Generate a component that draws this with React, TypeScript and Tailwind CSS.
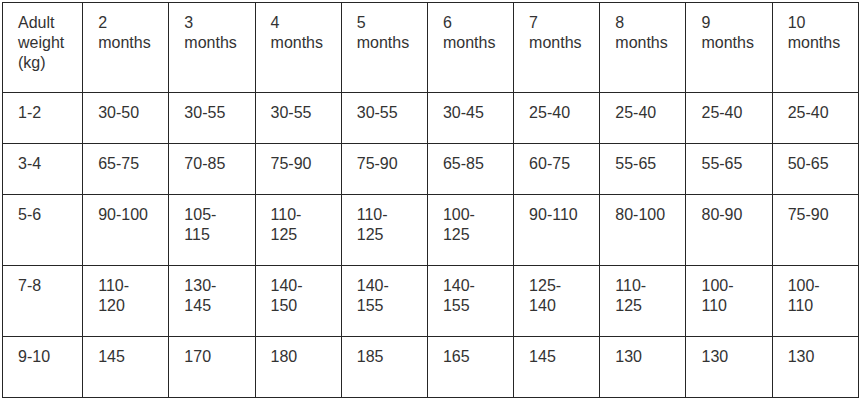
import React from "react";

const headers = ["2", "3", "4", "5", "6", "7", "8", "9", "10"];

const rows: { weight: string; values: string[]; height: string }[] = [
  {
    weight: "1-2",
    values: ["30-50", "30-55", "30-55", "30-55", "30-45", "25-40", "25-40", "25-40", "25-40"],
    height: "h-[51px]",
  },
  {
    weight: "3-4",
    values: ["65-75", "70-85", "75-90", "75-90", "65-85", "60-75", "55-65", "55-65", "50-65"],
    height: "h-[51px]",
  },
  {
    weight: "5-6",
    values: ["90-100", "105-\n115", "110-\n125", "110-\n125", "100-\n125", "90-110", "80-100", "80-90", "75-90"],
    height: "h-[71px]",
  },
  {
    weight: "7-8",
    values: ["110-\n120", "130-\n145", "140-\n150", "140-\n155", "140-\n155", "125-\n140", "110-\n125", "100-\n110", "100-\n110"],
    height: "h-[71px]",
  },
  {
    weight: "9-10",
    values: ["145", "170", "180", "185", "165", "145", "130", "130", "130"],
    height: "h-[61px]",
  },
];

const cell = "border border-[#262626] align-top pt-[10px] pl-[15px] pr-[6px] whitespace-pre-line";

const App = () => {
  return (
    <div className="w-[862px] h-[400px] bg-white pt-[2px] pl-[2px] font-['Liberation_Sans',Arial,sans-serif] text-[16px] leading-[20px] text-[#333333]">
      <table className="border-collapse table-fixed w-[857px]">
        <colgroup>
          <col className="w-[80px]" />
          {headers.map((h) => (
            <col key={h} className="w-[86px]" />
          ))}
        </colgroup>
        <tbody>
          <tr className="h-[90px]">
            <td className={cell}>{"Adult\nweight\n(kg)"}</td>
            {headers.map((h) => (
              <td key={h} className={cell}>
                {h}
                <br />
                months
              </td>
            ))}
          </tr>
          {rows.map((row) => (
            <tr key={row.weight} className={row.height}>
              <td className={cell}>{row.weight}</td>
              {row.values.map((v, i) => (
                <td key={i} className={cell}>
                  {v}
                </td>
              ))}
            </tr>
          ))}
        </tbody>
      </table>
    </div>
  );
};

export default App;
